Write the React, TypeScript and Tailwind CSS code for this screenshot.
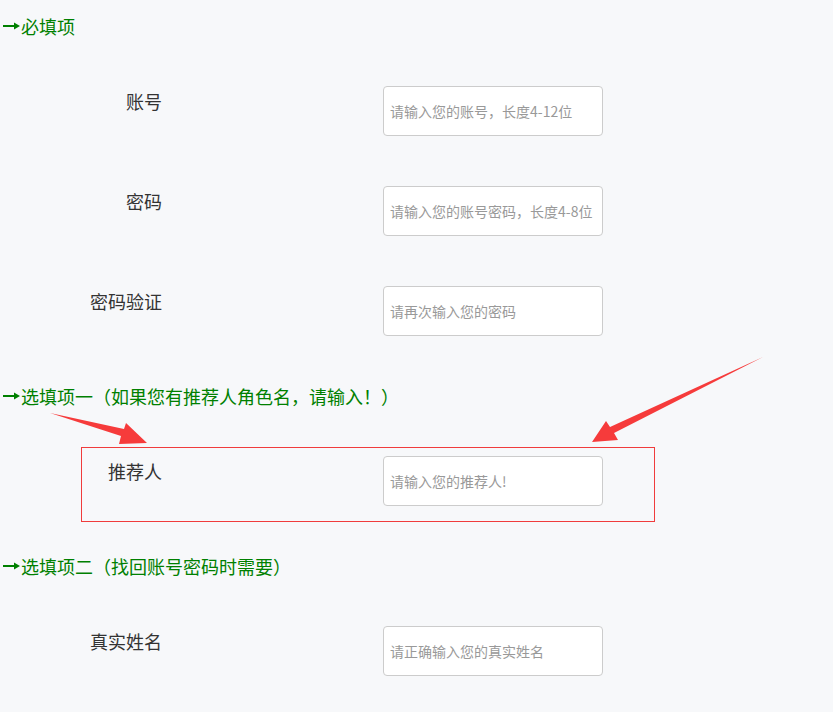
import type { ReactNode } from 'react'

const font = { fontFamily: '"Microsoft YaHei", "Noto Sans CJK SC", sans-serif' }

function Heading({ children }: { children: ReactNode }) {
  return (
    <div className="flex items-center text-[18px] leading-6 text-[#008000] [font-feature-settings:'fwid']">
      <svg className="ml-[3px] mr-[1px] shrink-0" width="17" height="10" viewBox="0 0 17 10">
        <path d="M0 5 H13" stroke="#008000" strokeWidth="2" />
        <polygon points="11,1.5 17,5 11,8.5" fill="#008000" />
      </svg>
      <span>{children}</span>
    </div>
  )
}

function Field({ label, placeholder, labelWidth = 162, gap = 221 }: { label: string; placeholder: string; labelWidth?: number; gap?: number }) {
  return (
    <div className="flex items-start">
      <div className="mt-[3px] text-right text-[18px] leading-6 text-[#333]" style={{ width: labelWidth }}>
        {label}
      </div>
      <input
        className="h-[50px] w-[220px] rounded border border-[#ccc] bg-white px-[6px] text-[14px] text-[#333] outline-none placeholder:text-[#999]"
        style={{ marginLeft: gap, ...font }}
        placeholder={placeholder}
      />
    </div>
  )
}

export default function App() {
  return (
    <div
      className="relative min-h-screen w-full overflow-hidden bg-[#f7f8fa] [font-kerning:none] [text-spacing-trim:space-all]"
      style={font}
    >
      <div className="flex flex-col pt-[14px]">
        <Heading>必填项</Heading>

        <div className="mt-[48px] flex flex-col gap-[50px]">
          <Field label="账号" placeholder="请输入您的账号，长度4-12位" />
          <Field label="密码" placeholder="请输入您的账号密码，长度4-8位" />
          <Field label="密码验证" placeholder="请再次输入您的密码" />
        </div>

        <div className="mt-[48px]">
          <Heading>选填项一（如果您有推荐人角色名，请输入！）</Heading>
        </div>

        <div className="ml-[81px] mt-[39px] h-[75px] w-[574px] border border-[#f03c3c] pt-2">
          <Field label="推荐人" placeholder="请输入您的推荐人!" labelWidth={80} gap={221} />
        </div>

        <div className="mt-[32px]">
          <Heading>选填项二（找回账号密码时需要）</Heading>
        </div>

        <div className="mt-[48px]">
          <Field label="真实姓名" placeholder="请正确输入您的真实姓名" />
        </div>
      </div>

      {/* annotation arrows */}
      <svg className="pointer-events-none absolute left-0 top-0" width="833" height="712" viewBox="0 0 833 712">
        <polygon points="50,413 124,429 126,423 147,443 119,444 121,436" fill="#f63b3b" />
        <polygon points="763,357 610,427 606,421 592,442 618,440 614,433" fill="#f63b3b" />
      </svg>
    </div>
  )
}
